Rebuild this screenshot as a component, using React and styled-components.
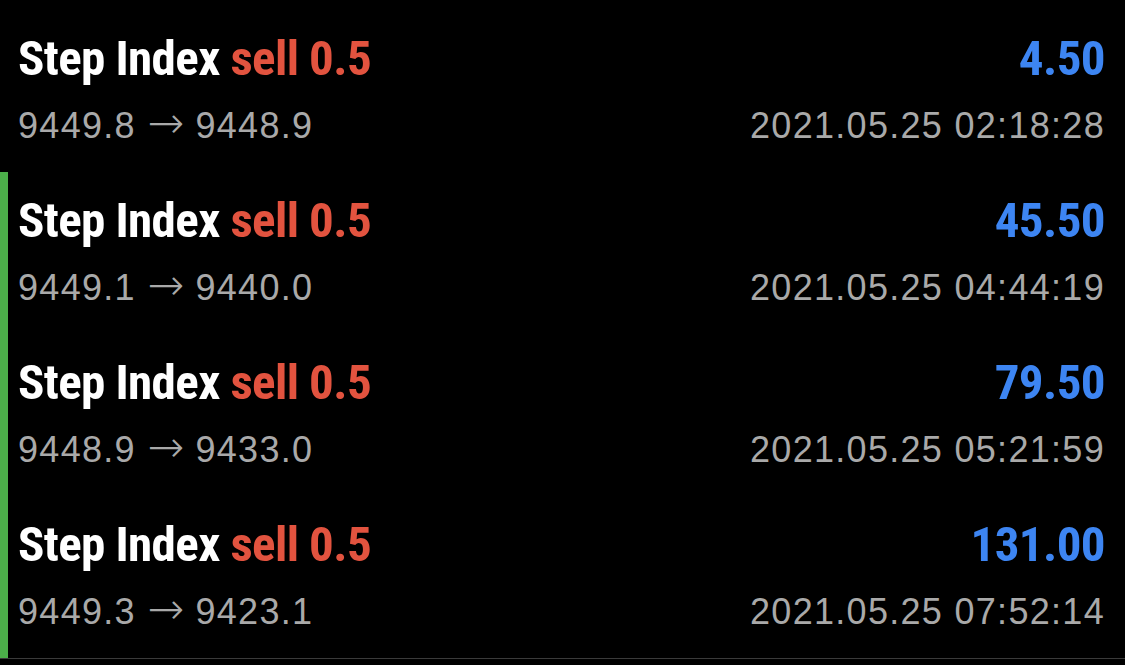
import React from 'react'
import styled, { createGlobalStyle } from 'styled-components'

const GlobalStyle = createGlobalStyle`
    html, body {
        margin:0;
        padding:0;
        background:#000;
    }
`
const List = styled.div`
    width:1125px;
    height:665px;
    padding-top:10px;
    box-sizing:border-box;
    background:#000;
    overflow:hidden;
`
const Rows = styled.div`
    border-bottom:1px solid #3a3a3a;
`
const Row = styled.div`
    height:162px;
    box-sizing:border-box;
    padding:22px 20px 0 10px;
    display:flex;
    justify-content:space-between;
    border-left:8px solid ${props=>props.$active ? '#4caf4a' : 'transparent'};
`
const Column = styled.div`
    display:flex;
    flex-direction:column;
    align-items:${props=>props.$end ? 'flex-end' : 'flex-start'};
    gap:19px;
`
const Title = styled.div`
    font-family:"Liberation Sans Narrow", "Roboto Condensed", "DejaVu Sans Condensed", "Open Sans Condensed", sans-serif;
    font-stretch:condensed;
    font-weight:700;
    font-size:49px;
    line-height:54px;
    letter-spacing:-0.6px;
    color:#fff;
`
const Side = styled.span`
    color:#e2533f;
`
const Amount = styled(Title)`
    color:#3d85f2;
`
const Sub = styled.div`
    font-family:"Liberation Sans", Arial, sans-serif;
    font-size:36px;
    line-height:42px;
    letter-spacing:1.3px;
    color:#a9a9a9;
`
const Arrow = styled.span`
    font-family:"DejaVu Sans", sans-serif;
    font-weight:200;
    font-size:44px;
    line-height:0;
    letter-spacing:0;
`

const trades = [
    { from:'9449.8', to:'9448.9', profit:'4.50', time:'2021.05.25 02:18:28', active:false },
    { from:'9449.1', to:'9440.0', profit:'45.50', time:'2021.05.25 04:44:19', active:true },
    { from:'9448.9', to:'9433.0', profit:'79.50', time:'2021.05.25 05:21:59', active:true },
    { from:'9449.3', to:'9423.1', profit:'131.00', time:'2021.05.25 07:52:14', active:true },
]

const App = () => {
  return (
    <>
      <GlobalStyle/>
      <List>
        <Rows>
          {trades.map((t,i)=>(
            <Row key={i} $active={t.active}>
              <Column>
                <Title>Step Index <Side>sell 0.5</Side></Title>
                <Sub>{t.from} <Arrow>→</Arrow> {t.to}</Sub>
              </Column>
              <Column $end>
                <Amount>{t.profit}</Amount>
                <Sub>{t.time}</Sub>
              </Column>
            </Row>
          ))}
        </Rows>
      </List>
    </>
  )
}

export default App
